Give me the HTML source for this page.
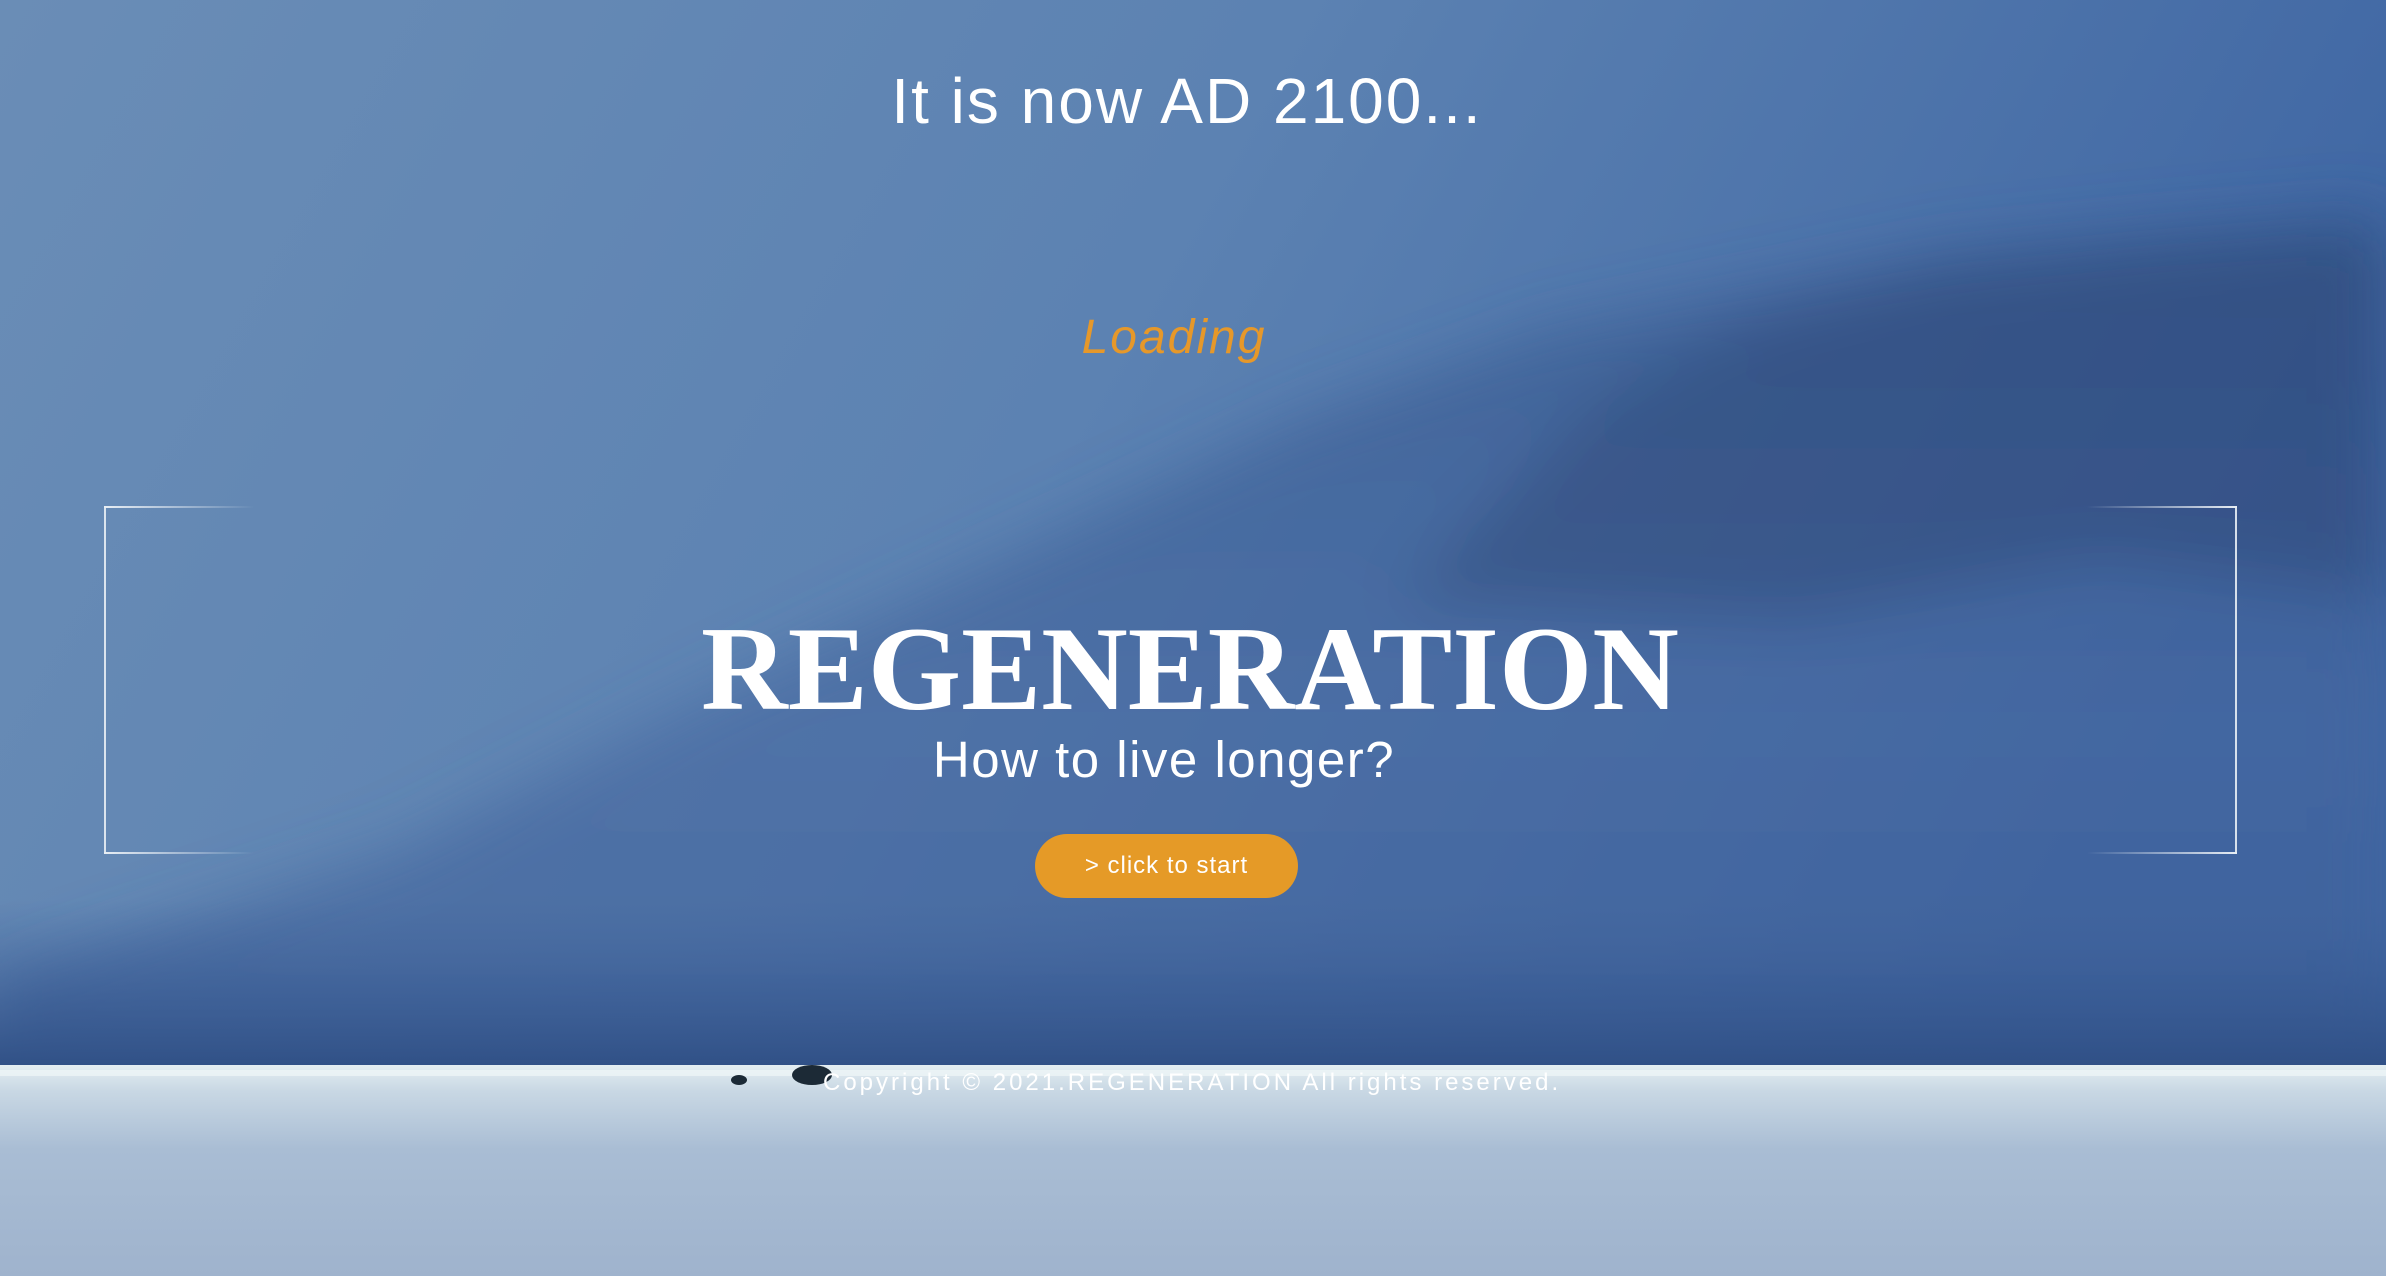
<!DOCTYPE html>
<html><head><meta charset="utf-8"><style>
html,body{margin:0;padding:0;width:2386px;height:1276px;overflow:hidden;font-family:"Liberation Sans",sans-serif}
.bg{position:absolute;left:0;top:0;width:2386px;height:1276px}
.t{position:absolute;left:0;width:2386px;text-align:center;color:#fff;box-sizing:border-box}
.br{position:absolute;top:506px;height:346px;width:150px}
</style></head><body>
<svg class="bg" width="2386" height="1276" viewBox="0 0 2386 1276">
<defs>
<linearGradient id="sky" x1="0" y1="0" x2="1" y2="0.3">
<stop offset="0" stop-color="#6a8db6"/><stop offset="0.5" stop-color="#5c82b2"/><stop offset="1" stop-color="#3f66a3"/></linearGradient>
<linearGradient id="mt" x1="0" y1="0" x2="0" y2="1">
<stop offset="0" stop-color="#33548a"/><stop offset="0.6" stop-color="#44679f"/><stop offset="1" stop-color="#3c5f98"/></linearGradient>
<linearGradient id="snow" x1="0" y1="0" x2="0" y2="1">
<stop offset="0" stop-color="#e4eef2"/><stop offset="0.12" stop-color="#c9d8e4"/><stop offset="0.4" stop-color="#a9bdd4"/><stop offset="1" stop-color="#9fb3cd"/></linearGradient>
<linearGradient id="bot" x1="0" y1="0" x2="0" y2="1">
<stop offset="0" stop-color="#3e609a" stop-opacity="0"/><stop offset="1" stop-color="#2f4f85"/></linearGradient>
<linearGradient id="fl" x1="0" y1="0" x2="1" y2="0"><stop offset="0" stop-color="#e8eef4"/><stop offset="1" stop-color="#e8eef4" stop-opacity="0"/></linearGradient>
<linearGradient id="fr" x1="1" y1="0" x2="0" y2="0"><stop offset="0" stop-color="#e8eef4"/><stop offset="1" stop-color="#e8eef4" stop-opacity="0"/></linearGradient>
<filter id="bl"><feGaussianBlur stdDeviation="30"/></filter>
</defs>
<rect width="2386" height="1276" fill="url(#sky)"/>
<g filter="url(#bl)">
<path d="M0 980 L400 850 L700 700 L1000 560 L1300 420 L1550 330 L1750 290 L1950 250 L2150 230 L2386 210 L2386 1070 L0 1070Z" fill="url(#mt)" opacity="0.6"/>
<path d="M1400 600 L1600 400 L1760 320 L1950 270 L2150 250 L2386 230 L2386 600 L2100 560 L1800 620Z" fill="#22365c" opacity="0.3"/>
</g>
<rect x="0" y="900" width="2386" height="170" fill="url(#bot)"/>
<rect x="0" y="1065" width="2386" height="211" fill="url(#snow)"/>
<rect x="0" y="1070" width="2386" height="6" fill="#f0f6f8" opacity="0.7"/>
<ellipse cx="812" cy="1075" rx="20" ry="10" fill="#1c2a36"/>
<ellipse cx="739" cy="1080" rx="8" ry="5" fill="#1c2a36"/>
<rect x="104" y="506" width="2" height="348" fill="#e8eef4" opacity="0.9"/>
<rect x="104" y="506" width="150" height="2" fill="url(#fl)"/>
<rect x="104" y="852" width="150" height="2" fill="url(#fl)"/>
<rect x="2235" y="506" width="2" height="348" fill="#e8eef4" opacity="0.9"/>
<rect x="2087" y="506" width="150" height="2" fill="url(#fr)"/>
<rect x="2087" y="852" width="150" height="2" fill="url(#fr)"/>
</svg>
<div class="t" style="top:64px;font-size:64px;letter-spacing:2px;padding-right:12px">It is now AD 2100...</div>
<div class="t" style="top:310px;font-size:48px;font-style:italic;color:#e6982a;letter-spacing:2px;padding-right:38px">Loading</div>
<div class="t" style="top:600px;font-family:'Liberation Serif',serif;font-weight:bold;font-size:120px;padding-right:6px">REGENERATION</div>
<div class="t" style="top:730px;font-size:51px;letter-spacing:1.5px;padding-right:58px">How to live longer?</div>
<div style="position:absolute;left:1035px;top:834px;width:263px;height:64px;border-radius:32px;background:#e59a27;color:#fff;font-size:24px;line-height:64px;text-align:center;letter-spacing:1px">&gt; click to start</div>
<div class="t" style="top:1069px;font-size:24px;letter-spacing:3px;left:823px;width:auto;text-align:left">Copyright © 2021.REGENERATION All rights reserved.</div>
</body></html>
